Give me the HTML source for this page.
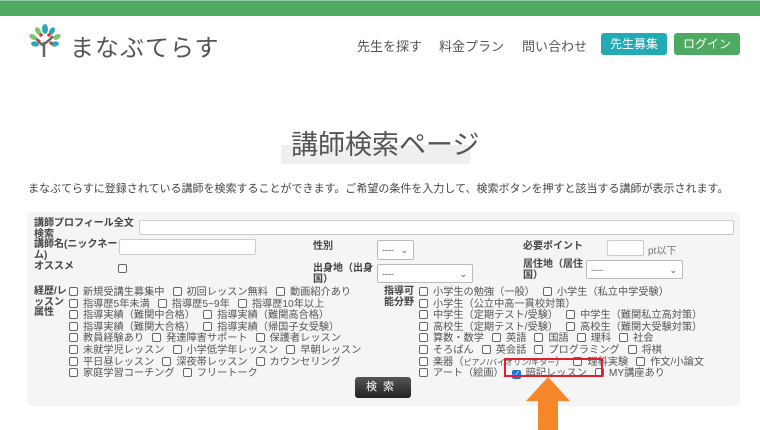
<!DOCTYPE html>
<html><head><meta charset="utf-8"><style>
*{margin:0;padding:0;box-sizing:border-box}
body{width:760px;height:430px;overflow:hidden;background:#fff;font-family:"Liberation Sans","Noto Sans CJK JP",sans-serif;color:#333;position:relative}
.a{position:absolute;white-space:nowrap}
.top{left:0;top:0;width:760px;height:16px;background:#4eaa60;border-top:1px solid #9ac9a3}
.nav{font-size:13px;color:#555;top:36px}
.btn{top:33px;height:22px;border-radius:3px;color:#fff;font-size:12px;line-height:22px;text-align:center}
.panel{left:27px;top:212px;width:713px;height:194px;background:#f5f5f5;border-radius:6px}
.lb{font-size:10px;font-weight:bold;color:#444;line-height:10.5px}
.in{background:#fff;border:1px solid #ccc;border-radius:2px}
.sel{background:#fff;border:1px solid #bbb;border-radius:2px;font-size:9px;color:#555;padding-left:4px;line-height:18px}
.sel i{position:absolute;right:5px;top:0;font-style:normal;font-size:9px}
.cb{font-size:10.2px;color:#555;line-height:10.6px}
.cb b{display:inline-block;width:9px;height:9px;border:1px solid #666;border-radius:2px;vertical-align:-1px;margin-right:5px;background:#fff;font-weight:normal}
.cb span{margin-right:8px}
</style></head><body>
<div class="a top"></div>
<svg class="a" style="left:28px;top:22px" width="34" height="36" viewBox="0 0 34 36">
<path d="M16 35 L16 20 M16 24 Q10 20 8 16 M16 22 Q22 18 25 14" stroke="#666" stroke-width="2.5" fill="none"/>
<ellipse cx="17" cy="7" rx="3" ry="5" fill="#29a6b8"/>
<ellipse cx="10" cy="9" rx="2.5" ry="4" fill="#7cc46b" transform="rotate(-30 10 9)"/>
<ellipse cx="24" cy="9" rx="2.5" ry="4" fill="#2aa7b6" transform="rotate(30 24 9)"/>
<ellipse cx="5" cy="15" rx="2.5" ry="4" fill="#7cc46b" transform="rotate(-60 5 15)"/>
<ellipse cx="29" cy="15" rx="2.5" ry="4" fill="#7cc46b" transform="rotate(60 29 15)"/>
<ellipse cx="7" cy="22" rx="2.5" ry="4" fill="#2aa7b6" transform="rotate(-80 7 22)"/>
<ellipse cx="27" cy="22" rx="2.5" ry="4" fill="#2aa7b6" transform="rotate(80 27 22)"/>
<circle cx="13" cy="13" r="1.8" fill="#d33"/><circle cx="21" cy="13" r="1.8" fill="#d33"/><circle cx="11" cy="19" r="1.6" fill="#d33"/><circle cx="23" cy="21" r="1.6" fill="#d33"/>
</svg>
<div class="a" style="left:70px;top:28px;font-size:24px;color:#555;letter-spacing:1px">まなぶてらす</div>
<div class="a nav" style="left:357px">先生を探す</div>
<div class="a nav" style="left:439px">料金プラン</div>
<div class="a nav" style="left:522px">問い合わせ</div>
<div class="a btn" style="left:601px;width:66px;background:#22aab5">先生募集</div>
<div class="a btn" style="left:674px;width:66px;background:#4eaa60">ログイン</div>
<div class="a" style="left:281px;top:145px;width:189px;height:19px;background:#efefef"></div>
<div class="a" style="left:291px;top:123px;font-size:27px;color:#555">講師検索ページ</div>
<div class="a" style="left:28px;top:180px;font-size:11px;color:#444">まなぶてらすに登録されている講師を検索することができます。ご希望の条件を入力して、検索ボタンを押すと該当する講師が表示されます。</div>
<div class="a panel"></div>
<div class="a lb" style="left:34px;top:219px">講師プロフィール全文<br>検索</div>
<div class="a in" style="left:139px;top:220px;width:595px;height:15px"></div>
<div class="a lb" style="left:34px;top:240px">講師名(ニックネー<br>ム)</div>
<div class="a in" style="left:119px;top:239px;width:137px;height:16px"></div>
<div class="a lb" style="left:313px;top:242px">性別</div>
<div class="a sel" style="left:377px;top:240px;width:37px;height:20px">----<i>⌄</i></div>
<div class="a lb" style="left:523px;top:242px">必要ポイント</div>
<div class="a in" style="left:607px;top:240px;width:37px;height:16px"></div>
<div class="a" style="left:648px;top:242px;font-size:10px;color:#777">pt以下</div>
<div class="a lb" style="left:34px;top:262px">オススメ</div>
<div class="a" style="left:118px;top:264px;width:9px;height:9px;border:1px solid #666;border-radius:2px;background:#fff"></div>
<div class="a lb" style="left:313px;top:264px">出身地（出身<br>国）</div>
<div class="a sel" style="left:377px;top:264px;width:96px;height:19px">----<i>⌄</i></div>
<div class="a lb" style="left:523px;top:260px">居住地（居住<br>国）</div>
<div class="a sel" style="left:586px;top:260px;width:97px;height:19px">----<i>⌄</i></div>
<div class="a lb" style="left:34px;top:287px">経歴/レ<br>ッスン<br>属性</div>
<div class="a cb" style="left:69px;top:287px">
<b></b><span>新規受講生募集中</span><b></b><span>初回レッスン無料</span><b></b>動画紹介あり<br>
<b></b><span>指導歴5年未満</span><b></b><span>指導歴5~9年</span><b></b>指導歴10年以上<br>
<b></b><span>指導実績（難関中合格）</span><b></b>指導実績（難関高合格）<br>
<b></b><span>指導実績（難関大合格）</span><b></b>指導実績（帰国子女受験）<br>
<b></b><span>教員経験あり</span><b></b><span>発達障害サポート</span><b></b>保護者レッスン<br>
<b></b><span>未就学児レッスン</span><b></b><span>小学低学年レッスン</span><b></b>早朝レッスン<br>
<b></b><span>平日昼レッスン</span><b></b><span>深夜帯レッスン</span><b></b>カウンセリング<br>
<b></b><span>家庭学習コーチング</span><b></b>フリートーク</div>
<div class="a lb" style="left:384px;top:287px">指導可<br>能分野</div>
<div class="a cb" style="left:419px;top:287px">
<b></b><span>小学生の勉強（一般）</span><b></b>小学生（私立中学受験）<br>
<b></b>小学生（公立中高一貫校対策）<br>
<b></b><span>中学生（定期テスト/受験）</span><b></b>中学生（難関私立高対策）<br>
<b></b><span>高校生（定期テスト/受験）</span><b></b>高校生（難関大受験対策）<br>
<b></b><span>算数・数学</span><b></b><span>英語</span><b></b><span>国語</span><b></b><span>理科</span><b></b>社会<br>
<b></b><span>そろばん</span><b></b><span>英会話</span><b></b><span>プログラミング</span><b></b>将棋<br>
<b></b><span>楽器（<small style="font-size:8px">ピアノ/バイオリン/ギター</small>）</span><b></b><span>理科実験</span><b></b>作文/小論文<br>
<b></b><span>アート（絵画）</span><b style="background:#1a73e8;border-color:#1a73e8;color:#fff;font-size:8px;line-height:7px;text-align:center">✓</b><span>暗記レッスン</span><b></b>MY講座あり</div>
<div class="a" style="left:504px;top:358px;width:99px;height:19px;border:2px solid #e0202a"></div>
<div class="a" style="left:355px;top:377px;width:56px;height:21px;border-radius:3px;background:linear-gradient(#555,#222);color:#fff;font-size:11px;line-height:21px;text-align:center;letter-spacing:6px">検索</div>
<svg class="a" style="left:526px;top:377px" width="44" height="53"><polygon points="22,0 44,24 32,24 32,53 12,53 12,24 0,24" fill="#f5862a"/></svg>
</body></html>
